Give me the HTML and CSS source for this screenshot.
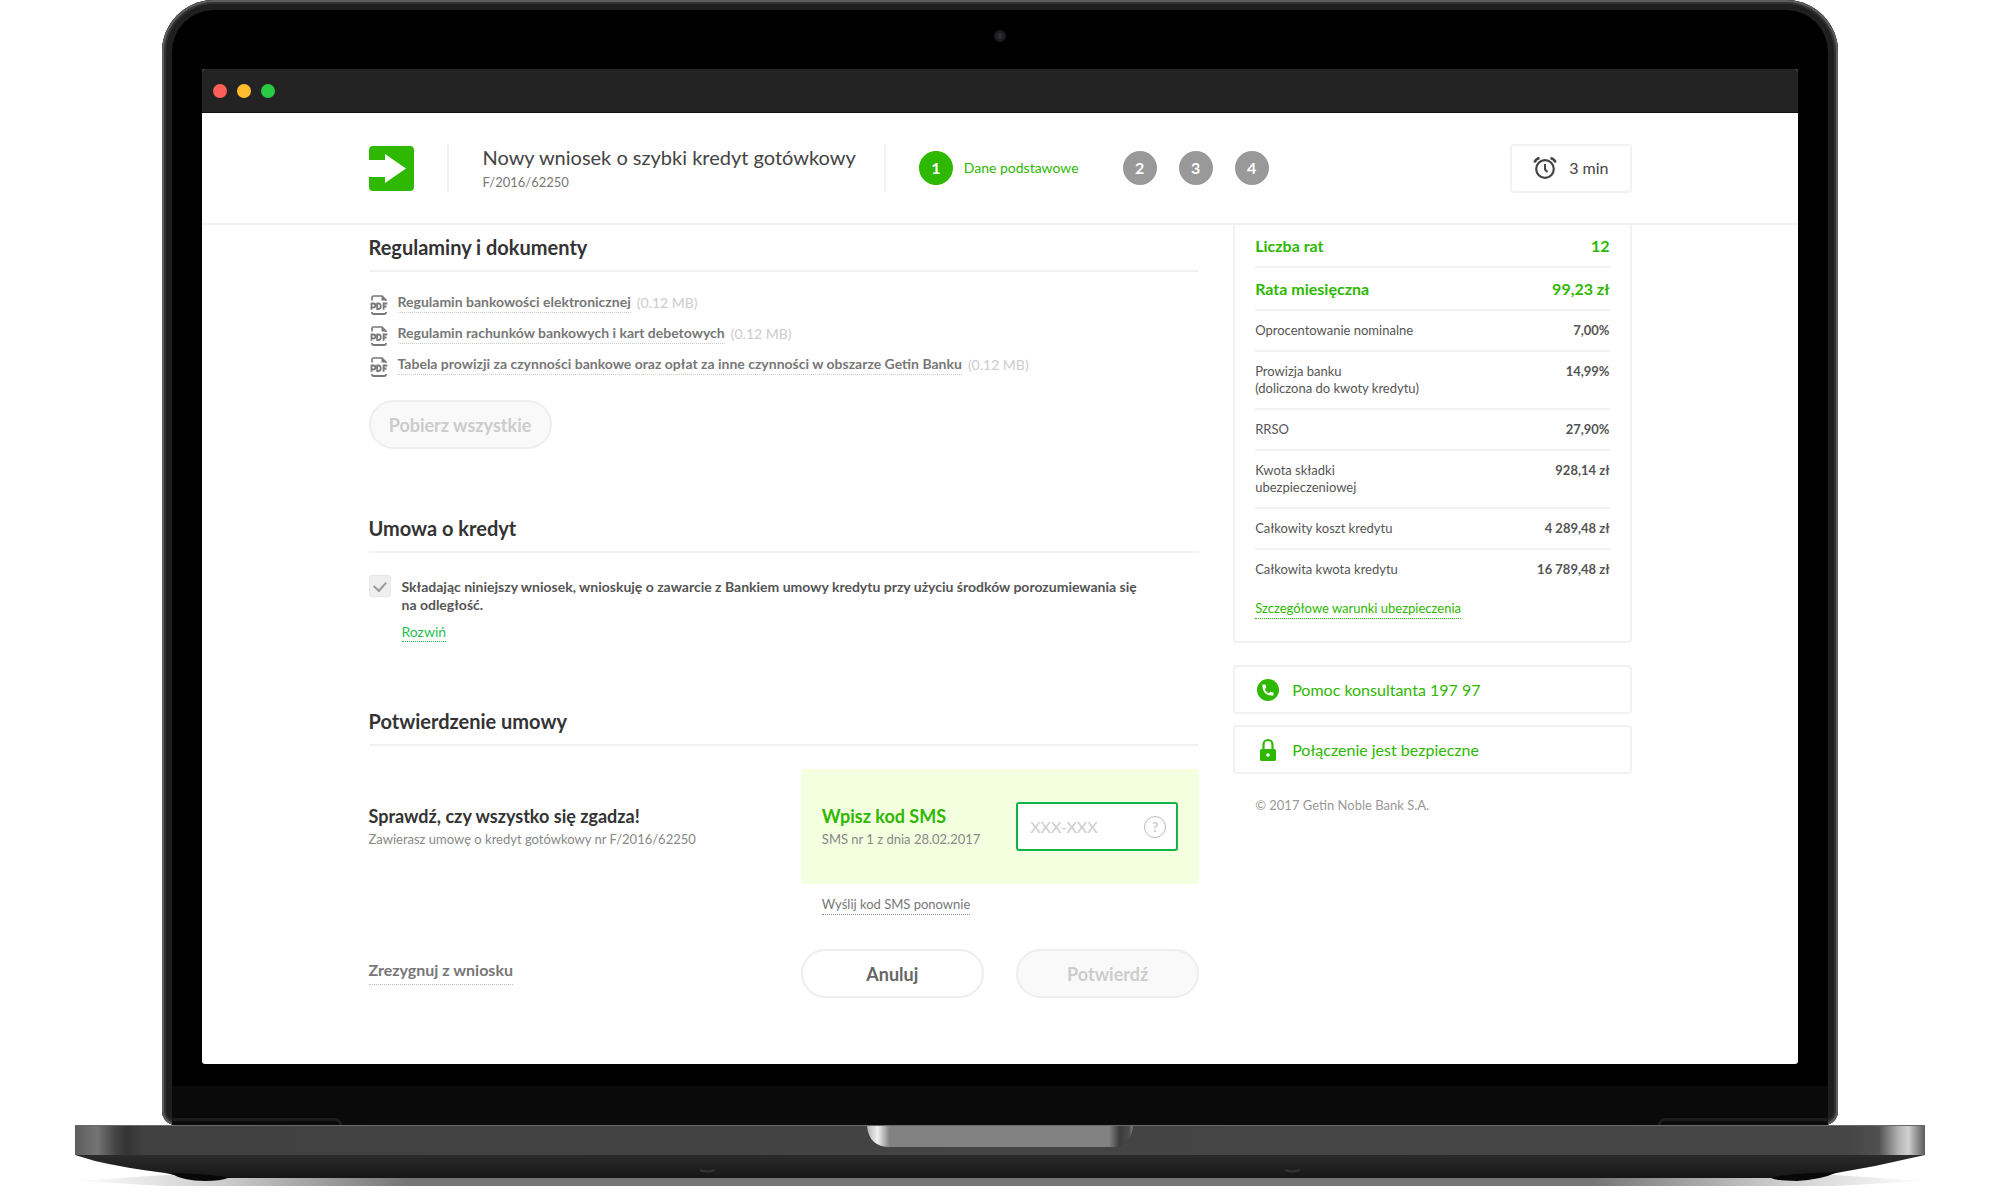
FILE: index.html
```html
<!DOCTYPE html>
<html lang="pl">
<head>
    <meta charset="UTF-8">
    <meta name="viewport" content="width=device-width, initial-scale=1.0">
    <title>Nowy wniosek o szybki kredyt gotówkowy</title>
    <link rel="stylesheet" href="styles.css">
</head>
<body>
    <!-- pdf icon used in the list of documents -->
    <svg width="0" height="0" class="defs" aria-hidden="true">
        <symbol id="pdf" viewBox="0 0 18 20">
            <path d="M2 5.500V2.500Q2 1 3.500 1H12L16 5V6" fill="none" stroke="#777" stroke-width="1.600"/>
            <path d="M11.500 1V5.500H16Z" fill="#777"/>
            <path d="M2 17V17.500Q2 19 3.500 19H14.500Q16 19 16 17.500V17" fill="none" stroke="#777" stroke-width="1.800"/>
            <path d="M1.500 14.800V8.500H3.500A1.700 1.700 0 0 1 3.500 12.300H1.500M7.200 8.500V14H8.200Q10.800 14 10.800 11.200T8.200 8.500ZM13.600 14.800V8.500H17.300M13.600 11.500H16.500" fill="none" stroke="#777" stroke-width="1.800"/>
        </symbol>
    </svg>

    <div class="laptop">
        <div class="lid">
            <span class="camera"></span>
            <div class="screen">
                <div class="titlebar">
                    <span class="dot red"></span>
                    <span class="dot yellow"></span>
                    <span class="dot green"></span>
                </div>

                <header class="header">
                    <div class="wrap header-in">
                        <a href="#" class="logo" aria-label="Getin Bank">
                            <svg width="45" height="45" viewBox="0 0 45 45">
                                <path d="M4 0H41Q45 0 45 4V41Q45 45 41 45H4Q0 45 0 41V31H16V37L37 22.500L16 8V14H0V4Q0 0 4 0Z" fill="#2eb800"/>
                            </svg>
                        </a>
                        <div class="title">
                            <h1>Nowy wniosek o szybki kredyt gotówkowy</h1>
                            <p>F/2016/62250</p>
                        </div>
                        <ol class="steps">
                            <li class="active"><span class="nr">1</span>Dane podstawowe</li>
                            <li><span class="nr">2</span></li>
                            <li><span class="nr">3</span></li>
                            <li><span class="nr">4</span></li>
                        </ol>
                        <div class="timer">
                            <svg width="24" height="24" viewBox="0 0 24 24" fill="none" stroke="#444" stroke-width="2.200">
                                <circle cx="12" cy="13" r="8.800"/>
                                <path d="M12 8V13.500L14.500 16" stroke-width="2"/>
                                <path d="M1.500 6.500Q2.500 3 6.500 2M22.500 6.500Q21.500 3 17.500 2" stroke-width="2.600"/>
                            </svg>
                            3 min
                        </div>
                    </div>
                </header>

                <div class="wrap content">
                    <main>
                        <section class="docs">
                            <h2>Regulaminy i dokumenty</h2>
                            <ul>
                                <li><svg class="pdf"><use href="#pdf"/></svg><a href="#">Regulamin bankowości elektronicznej</a> <span>(0.12 MB)</span></li>
                                <li><svg class="pdf"><use href="#pdf"/></svg><a href="#">Regulamin rachunków bankowych i kart debetowych</a> <span>(0.12 MB)</span></li>
                                <li><svg class="pdf"><use href="#pdf"/></svg><a href="#">Tabela prowizji za czynności bankowe oraz opłat za inne czynności w obszarze Getin Banku</a> <span>(0.12 MB)</span></li>
                            </ul>
                            <button class="btn" disabled>Pobierz wszystkie</button>
                        </section>

                        <section class="agreement">
                            <h2>Umowa o kredyt</h2>
                            <div class="check">
                                <input type="checkbox" id="zgoda" checked>
                                <div>
                                    <label for="zgoda">Składając niniejszy wniosek, wnioskuję o zawarcie z Bankiem umowy kredytu przy użyciu środków porozumiewania się na&nbsp;odległość.</label>
                                    <a href="#" class="more">Rozwiń</a>
                                </div>
                            </div>
                        </section>

                        <section class="confirm">
                            <h2>Potwierdzenie umowy</h2>
                            <div class="halves">
                                <div class="info">
                                    <h3>Sprawdź, czy wszystko się zgadza!</h3>
                                    <p>Zawierasz umowę o kredyt gotówkowy nr F/2016/62250</p>
                                </div>
                                <div class="sms">
                                    <div>
                                        <h3><label for="kod">Wpisz kod SMS</label></h3>
                                        <p>SMS nr 1 z dnia 28.02.2017</p>
                                    </div>
                                    <div class="code">
                                        <input type="text" id="kod" placeholder="XXX-XXX">
                                        <button class="help" aria-label="Pomoc">?</button>
                                    </div>
                                </div>
                                <a href="#" class="resend">Wyślij kod SMS ponownie</a>
                                <a href="#" class="resign">Zrezygnuj z wniosku</a>
                                <div class="buttons">
                                    <button class="btn cancel">Anuluj</button>
                                    <button class="btn" disabled>Potwierdź</button>
                                </div>
                            </div>
                        </section>
                    </main>

                    <aside>
                        <div class="summary">
                            <table>
                                <tr class="big"><th>Liczba rat</th><td>12</td></tr>
                                <tr class="big"><th>Rata miesięczna</th><td>99,23 zł</td></tr>
                                <tr><th>Oprocentowanie nominalne</th><td>7,00%</td></tr>
                                <tr><th>Prowizja banku<br>(doliczona do kwoty kredytu)</th><td>14,99%</td></tr>
                                <tr><th>RRSO</th><td>27,90%</td></tr>
                                <tr><th>Kwota składki<br>ubezpieczeniowej</th><td>928,14 zł</td></tr>
                                <tr><th>Całkowity koszt kredytu</th><td>4 289,48 zł</td></tr>
                                <tr><th>Całkowita kwota kredytu</th><td>16 789,48 zł</td></tr>
                            </table>
                            <a href="#" class="terms">Szczegółowe warunki ubezpieczenia</a>
                        </div>

                        <a href="#" class="box">
                            <svg width="24" height="24" viewBox="0 0 24 24">
                                <circle cx="12" cy="12" r="11" fill="#2eb800"/>
                                <path d="M6.500 6.500H9.500L10.300 9.800L8.700 11.200Q10 14 12.800 15.300L14.200 13.700L17.500 14.500V17.500Q12 18 9 15T6.500 6.500Z" fill="#fff"/>
                            </svg>
                            Pomoc konsultanta 197 97
                        </a>
                        <a href="#" class="box">
                            <svg width="24" height="24" viewBox="0 0 24 24">
                                <path d="M7.500 11V6.500A4.500 4.500 0 0 1 16.500 6.500V11" fill="none" stroke="#2eb800" stroke-width="2.200"/>
                                <rect x="4" y="11" width="16" height="12" rx="1.500" fill="#2eb800"/>
                                <circle cx="12" cy="17" r="1.800" fill="#fff"/>
                            </svg>
                            Połączenie jest bezpieczne
                        </a>
                        <p class="copy">© 2017 Getin Noble Bank S.A.</p>
                    </aside>
                </div>
            </div>
            <div class="chin">
                <span class="hinge"></span>
                <span class="hinge right"></span>
            </div>
        </div>

        <!-- bottom part of the laptop -->
        <svg class="base" viewBox="0 0 1850 61" preserveAspectRatio="none" aria-hidden="true">
            <defs>
                <linearGradient id="bar">
                    <stop offset="0" stop-color="#5c5c5c"/>
                    <stop offset="0.012" stop-color="#747474"/>
                    <stop offset="0.022" stop-color="#444"/>
                    <stop offset="0.028" stop-color="#343434"/>
                    <stop offset="0.038" stop-color="#414141"/>
                    <stop offset="0.960" stop-color="#464646"/>
                    <stop offset="0.975" stop-color="#505050"/>
                    <stop offset="0.986" stop-color="#b4b4b4"/>
                    <stop offset="0.991" stop-color="#d0d0d0"/>
                    <stop offset="0.996" stop-color="#8c8c8c"/>
                    <stop offset="1" stop-color="#5a5a5a"/>
                </linearGradient>
                <linearGradient id="under" x2="0" y2="1">
                    <stop offset="0" stop-color="#2c2c2c"/>
                    <stop offset="1" stop-color="#161616"/>
                </linearGradient>
                <linearGradient id="shade">
                    <stop offset="0" stop-color="#fff"/>
                    <stop offset="0.080" stop-color="#ccc"/>
                    <stop offset="0.180" stop-color="#757575"/>
                    <stop offset="0.820" stop-color="#757575"/>
                    <stop offset="0.920" stop-color="#ccc"/>
                    <stop offset="1" stop-color="#fff"/>
                </linearGradient>
                <linearGradient id="notch">
                    <stop offset="0" stop-color="#b4b4b4"/>
                    <stop offset="0.040" stop-color="#efefef"/>
                    <stop offset="0.085" stop-color="#828282"/>
                    <stop offset="0.910" stop-color="#828282"/>
                    <stop offset="0.950" stop-color="#3c3c3c"/>
                    <stop offset="0.985" stop-color="#4a4a4a"/>
                    <stop offset="1" stop-color="#858585"/>
                </linearGradient>
            </defs>
            <path d="M0 56L90 50H1760L1850 56L1760 61H90Z" fill="url(#shade)"/>
            <path d="M0 29H1850V30L1800 41L1750 50Q1740 53 1720 53H130Q105 52 90 48Q50 43 20 36L0 30Z" fill="url(#under)"/>
            <path d="M95 48Q140 49 153 53Q146 56 130 56Q108 56 95 48ZM1763 47Q1705 49 1696 53Q1703 56 1722 56Q1745 55 1763 47Z" fill="#080808"/>
            <rect width="1850" height="30" fill="url(#bar)"/>
            <rect width="1850" height="1" fill="#6a6a6a"/>
            <path d="M792 1H1058Q1056 22 1037 22H815Q794 22 792 1Z" fill="url(#notch)"/>
            <path d="M625 45Q632 48 640 45M1210 45Q1217 48 1225 45" fill="none" stroke="#333" stroke-width="2"/>
        </svg>
    </div>
</body>
</html>
```
FILE: styles.css
```css
* {
    margin: 0;
    padding: 0;
    box-sizing: border-box;
}

body {
    font-family: Lato, "Open Sans", sans-serif;
    font-size: 13px;
    line-height: 18px;
    color: #555;
    background-color: #fff;
}

a {
    color: inherit;
    text-decoration: none;
}

ul, ol {
    list-style: none;
}

.defs {
    position: absolute;
}

/* Laptop */
.lid {
    position: relative;
    width: 84%;
    max-width: 1676px;
    margin: 0 auto;
    padding: 69px 40px 0;
    background-color: #000;
    border-radius: 52px 52px 14px 14px;
    box-shadow: inset 0 0 0 2px #5c5e5e, inset 0 0 0 4px #333, inset 0 0 0 10px #1f1f1f;
}

.camera {
    position: absolute;
    top: 30px;
    left: 50%;
    width: 12px;
    height: 12px;
    margin-left: -6px;
    border: 3px solid #1c1c1c;
    border-radius: 50%;
    background-color: #2b2b33;
}

.screen {
    background-color: #fff;
    border-radius: 3px;
    overflow: hidden;
}

.titlebar {
    display: flex;
    align-items: center;
    gap: 10px;
    height: 44px;
    padding-left: 11px;
    background-color: #232323;
    border-bottom: 1px solid #111;
}

.dot {
    width: 14px;
    height: 14px;
    border-radius: 50%;
}

.red { background-color: #ff5f57; }
.yellow { background-color: #febc2e; }
.green { background-color: #28ca41; }

.chin {
    position: relative;
    height: 61px;
    margin: 0 -30px;
    border-top: 22px solid #000;
    background-color: #0a0a0a;
}

.hinge {
    position: absolute;
    left: 0;
    bottom: 0;
    width: 170px;
    height: 7px;
    border-top: 3px solid #1c1c1c;
    border-right: 3px solid #1c1c1c;
    border-top-right-radius: 7px;
}

.hinge.right {
    left: auto;
    right: 0;
    border-right: none;
    border-left: 3px solid #1c1c1c;
    border-radius: 7px 0 0 0;
}

.base {
    display: block;
    width: 92.5%;
    height: 61px;
    margin: 0 auto;
}

/* Header */
.wrap {
    max-width: 1263px;
    margin: 0 auto;
}

.header {
    border-bottom: 2px solid #f2f2f2;
}

.header-in {
    display: flex;
    align-items: center;
    height: 110px;
}

.logo svg {
    display: block;
}

.title {
    height: 48px;
    margin-left: 33px;
    padding: 0 28px 0 34px;
    border-left: 2px solid #f2f2f2;
    border-right: 2px solid #f2f2f2;
}

.title h1 {
    font-size: 20px;
    line-height: 26px;
    font-weight: 400;
    color: #444;
}

.title p {
    line-height: 24px;
    color: #777;
}

.steps {
    display: flex;
    gap: 22px;
    margin-left: 33px;
}

.steps li {
    display: flex;
    align-items: center;
    gap: 11px;
}

.steps .active {
    margin-right: 22px;
    font-size: 14px;
    color: #2eb800;
}

.nr {
    width: 34px;
    height: 34px;
    border-radius: 50%;
    background-color: #999;
    color: #fff;
    font-size: 16px;
    line-height: 34px;
    font-weight: 700;
    text-align: center;
}

.active .nr {
    background-color: #2eb800;
}

.timer {
    display: flex;
    align-items: center;
    gap: 12px;
    height: 49px;
    margin-left: auto;
    padding: 0 21px;
    border: 2px solid #f2f2f2;
    border-radius: 4px;
    font-size: 16px;
    color: #444;
}

/* Content */
.content {
    display: grid;
    grid-template-columns: repeat(3, 1fr);
    column-gap: 34px;
    padding-bottom: 66px;
}

main {
    grid-column: span 2;
}

h2 {
    padding-bottom: 11px;
    border-bottom: 2px solid #f2f2f2;
    font-size: 20px;
    line-height: 24px;
    font-weight: 700;
    color: #333;
}

.docs {
    padding-top: 10px;
}

.docs ul {
    padding: 15px 0 20px;
}

.docs li {
    display: flex;
    align-items: center;
    height: 31px;
    font-size: 14px;
    color: #ccc;
}

.pdf {
    width: 18px;
    height: 20px;
    margin: 4px 10px 0 1px;
}

.docs li a {
    margin-right: 6px;
    border-bottom: 1px dotted #ccc;
    line-height: 20px;
    font-weight: 700;
    color: #777;
}

.btn {
    width: 183px;
    height: 49px;
    border: 2px solid #eee;
    border-radius: 25px;
    background-color: #fff;
    font-family: inherit;
    font-size: 18px;
    font-weight: 700;
    color: #666;
    cursor: pointer;
}

.btn:disabled {
    background-color: #f9f9f9;
    color: #ccc;
    cursor: default;
}

.agreement,
.confirm {
    margin-top: 67px;
}

.check {
    display: flex;
    align-items: flex-start;
    gap: 11px;
    padding: 22px 34px 0 0;
    font-size: 14px;
}

.check input {
    flex: none;
    width: 22px;
    height: 22px;
    appearance: none;
    border: 1px solid #e6e6e6;
    border-radius: 3px;
    background-color: #efefef;
}

.check input:checked::after {
    content: "";
    display: block;
    width: 6px;
    height: 10px;
    margin: 3px auto;
    border: solid #999;
    border-width: 0 2px 2px 0;
    transform: rotate(42deg);
}

.check label {
    display: block;
    padding-top: 3px;
    font-weight: 700;
}

.more {
    display: inline-block;
    margin-top: 9px;
    border-bottom: 1px dotted #1fbf4f;
    color: #1fbf4f;
}

.halves {
    display: grid;
    grid-template-columns: 1fr 1fr;
    column-gap: 34px;
    padding-top: 23px;
}

.halves h3 {
    font-size: 18px;
    line-height: 24px;
    color: #333;
}

.halves p {
    line-height: 22px;
    color: #888;
}

.info {
    align-self: center;
}

.sms {
    display: flex;
    align-items: center;
    justify-content: space-between;
    height: 115px;
    padding: 0 21px;
    border-radius: 4px;
    background-color: #f4ffdf;
}

.halves .sms h3 {
    color: #2eb800;
}

.code {
    display: flex;
    align-items: center;
    width: 162px;
    height: 49px;
    padding: 0 10px 0 12px;
    border: 2px solid #0fb548;
    border-radius: 3px;
    background-color: #fff;
}

.code input {
    flex: 1;
    min-width: 0;
    border: none;
    outline: none;
    font-family: inherit;
    font-size: 16px;
    color: #555;
}

.code input::placeholder {
    color: #ccc;
}

.help {
    width: 22px;
    height: 22px;
    border: 1px solid #bbb;
    border-radius: 50%;
    background: none;
    font-family: inherit;
    font-size: 14px;
    line-height: 20px;
    font-weight: 700;
    color: #ccc;
    cursor: pointer;
}

.resend {
    grid-column: 2;
    justify-self: start;
    margin: 10px 0 34px 21px;
    border-bottom: 1px dotted #888;
    line-height: 20px;
    color: #777;
}

.resign {
    align-self: start;
    justify-self: start;
    margin-top: 7px;
    border-bottom: 1px dotted #bbb;
    font-size: 16px;
    line-height: 28px;
    font-weight: 700;
    color: #777;
}

.buttons {
    display: flex;
    justify-content: space-between;
}

/* Right column */
.summary {
    padding: 0 20px 22px;
    border: 2px solid #f2f2f2;
    border-top: none;
    border-radius: 0 0 4px 4px;
}

.summary table {
    width: 100%;
    border-collapse: collapse;
}

.summary th,
.summary td {
    padding: 11px 0;
    border-bottom: 2px solid #f2f2f2;
    line-height: 17px;
    font-weight: 400;
    text-align: left;
    vertical-align: top;
}

.summary td {
    font-weight: 700;
    text-align: right;
}

.summary .big th,
.summary .big td {
    padding: 12px 0;
    font-size: 16px;
    font-weight: 700;
    color: #2eb800;
}

.summary tr:last-child th,
.summary tr:last-child td {
    border-bottom: none;
}

.terms {
    display: inline-block;
    margin-top: 9px;
    border-bottom: 1px dotted #2eb800;
    line-height: 20px;
    color: #2eb800;
}

.box {
    display: flex;
    align-items: center;
    gap: 12px;
    height: 49px;
    margin-bottom: 11px;
    padding: 0 21px;
    border: 2px solid #f2f2f2;
    border-radius: 4px;
    font-size: 16px;
    color: #2eb800;
}

.summary + .box {
    margin-top: 22px;
}

.copy {
    padding: 11px 22px;
    color: #999;
}
```
